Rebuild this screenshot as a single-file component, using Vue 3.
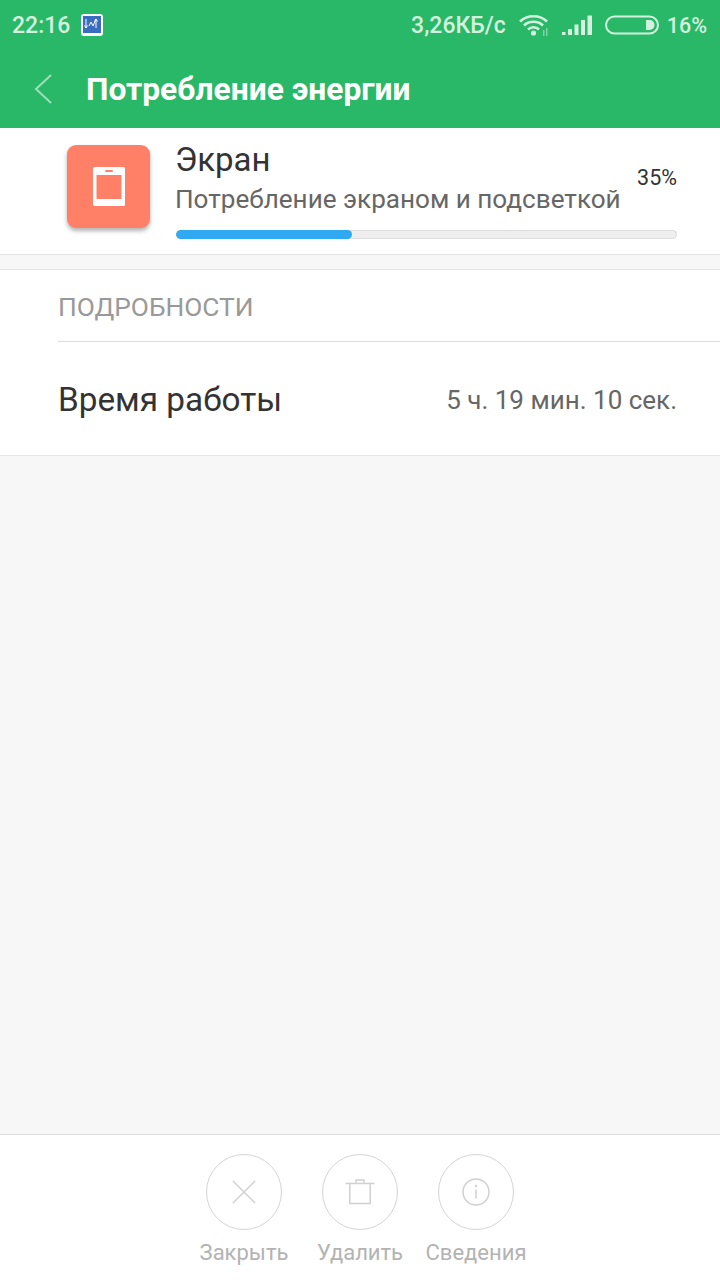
<script setup>
const actions = [
  { id: 'close', label: 'Закрыть' },
  { id: 'delete', label: 'Удалить' },
  { id: 'info', label: 'Сведения' },
]
</script>

<template>
  <div class="page">
    <div class="topbar">
      <div class="status">
        <span class="time">22:16</span>
        <svg class="notif" width="22" height="22" viewBox="0 0 22 22">
          <rect x="0" y="0" width="22" height="22" rx="3" fill="#fff" />
          <rect x="2" y="2" width="18" height="17" fill="#3a6cc0" />
          <path d="M5 5v9M3.500 11.500L5 14l1.500-2.500M8 12l2-4 2 4 3-7v9M13.500 7.500L15 5l1.500 2.500" fill="none" stroke="#fff" stroke-width="1" />
        </svg>
        <span class="spacer"></span>
        <span class="speed">3,26КБ/с</span>
        <svg class="wifi" width="30" height="24" viewBox="0 0 30 24">
          <path d="M1 8.500C8 1.500 21 1.500 28 8.500M5 12.500C10 7.500 19 7.500 24 12.500M9 16.500C12 13.500 17 13.500 20 16.500" fill="none" stroke="#d4f1df" stroke-width="2.600" />
          <circle cx="14.500" cy="20" r="2.600" fill="#d4f1df" />
          <path d="M24 17h1.500v6H24zM27 15h1.500v8H27z" fill="#d4f1df" opacity="0.5" />
        </svg>
        <svg class="signal" width="32" height="22" viewBox="0 0 32 22">
          <path d="M1 18h3.500v3H1zM7 15h4v6H7zM13.500 10.500h4V21h-4zM20 6h4v15h-4zM26.500 1.500H31V21h-4.500z" fill="#d4f1df" />
        </svg>
        <svg class="battery" width="54" height="20" viewBox="0 0 54 20">
          <rect x="1" y="1.500" width="52" height="17" rx="8.500" fill="none" stroke="#d4f1df" stroke-width="2" />
          <path d="M41 5h3.500a5 5 0 0 1 0 10H41z" fill="#d4f1df" />
        </svg>
        <span class="percent">16%</span>
      </div>
      <div class="titlebar">
        <svg class="back" width="20" height="32" viewBox="0 0 20 32">
          <path d="M18 2L3 16l15 14" fill="none" stroke="#9be0b6" stroke-width="2" />
        </svg>
        <span class="title">Потребление энергии</span>
      </div>
    </div>

    <div class="usage">
      <div class="app-icon">
        <svg width="32" height="39" viewBox="0 0 32 39">
          <path fill-rule="evenodd" d="M1.500 0h29A1.500 1.500 0 0 1 32 1.500v36a1.500 1.500 0 0 1-1.500 1.500h-29A1.500 1.500 0 0 1 0 37.500v-36A1.500 1.500 0 0 1 1.500 0zM3.500 8v24h25V8z" fill="#fff" />
          <rect x="12" y="3" width="8" height="2" rx="1" fill="#ff8066" />
        </svg>
      </div>
      <div class="usage-body">
        <div class="usage-top">
          <div class="usage-text">
            <div class="usage-name">Экран</div>
            <div class="usage-desc">Потребление экраном и подсветкой</div>
          </div>
          <div class="usage-pct">35%</div>
        </div>
        <div class="bar"><div class="bar-fill" :style="{ width: '35.200%' }"></div></div>
      </div>
    </div>

    <div class="details">
      <div class="details-head"><span>ПОДРОБНОСТИ</span></div>
      <div class="details-row">
        <span class="row-label">Время работы</span>
        <span class="row-value">5 ч. 19 мин. 10 сек.</span>
      </div>
    </div>

    <div class="fill"></div>

    <div class="footer">
      <div v-for="a in actions" :key="a.id" class="action">
        <div class="circle">
          <svg v-if="a.id === 'close'" width="30" height="30" viewBox="0 0 30 30">
            <path d="M4 4l22 22M26 4L4 26" fill="none" stroke="#d0d0d0" stroke-width="1.500" />
          </svg>
          <svg v-else-if="a.id === 'delete'" width="30" height="30" viewBox="0 0 30 30">
            <path d="M0.500 6.500h29M4.800 6.500V26.500h20.400V6.500M11 6.500V3h8v3.500" fill="none" stroke="#d0d0d0" stroke-width="1.500" />
          </svg>
          <svg v-else width="30" height="30" viewBox="0 0 30 30">
            <circle cx="15" cy="15" r="13" fill="none" stroke="#d0d0d0" stroke-width="1.500" />
            <path d="M15 12.500v9" stroke="#d0d0d0" stroke-width="1.500" />
            <circle cx="15" cy="9" r="1.200" fill="#d0d0d0" />
          </svg>
        </div>
        <span class="action-label">{{ a.label }}</span>
      </div>
    </div>
  </div>
</template>

<style scoped>
.page {
  display: flex;
  flex-direction: column;
  width: 720px;
  height: 1280px;
  background: #f7f7f7;
  font-family: Roboto, "Noto Sans", sans-serif;
  overflow: hidden;
}

.topbar {
  height: 128px;
  background: #29b867;
}

.status {
  display: flex;
  align-items: center;
  height: 50px;
  padding: 0 13px 0 12px;
  color: #d4f1df;
  font-size: 23px;
  font-weight: 500;
}

.notif {
  margin-left: 11px;
}

.spacer {
  flex: 1;
}

.wifi {
  margin-left: 13px;
}

.signal {
  margin-left: 12px;
}

.battery {
  margin-left: 12px;
}

.percent {
  margin-left: 8px;
  font-size: 21.500px;
}

.titlebar {
  display: flex;
  align-items: center;
  height: 78px;
  padding-left: 33px;
}

.title {
  margin-left: 33px;
  color: #fff;
  font-size: 31.800px;
  font-weight: 700;
}

.usage {
  display: flex;
  box-sizing: border-box;
  height: 127px;
  padding: 17px 43px 0 67px;
  background: #fff;
  border-bottom: 1px solid #e4e4e4;
}

.app-icon {
  display: flex;
  align-items: center;
  justify-content: center;
  width: 83px;
  height: 83px;
  border-radius: 9px;
  background: #ff8066;
  box-shadow: 0 3px 4px rgba(0, 0, 0, 0.3);
}

.usage-body {
  flex: 1;
  margin-left: 25px;
}

.usage-top {
  display: flex;
  justify-content: space-between;
  align-items: center;
}

.usage-name {
  color: #333;
  font-size: 33px;
  line-height: 30px;
}

.usage-desc {
  margin-top: 9px;
  color: #666;
  font-size: 26.100px;
  line-height: 30px;
}

.usage-pct {
  margin-top: -5px;
  color: #333;
  font-size: 21.500px;
}

.bar {
  height: 9px;
  margin-top: 16px;
  margin-left: 1px;
  border-radius: 5px;
  background: #eee;
  box-shadow: inset 0 0 0 1px #ddd;
  overflow: hidden;
}

.bar-fill {
  height: 100%;
  border-radius: 5px;
  background: #2fa9f2;
}

.details {
  margin-top: 14px;
  background: #fff;
  border-top: 1px solid #e4e4e4;
  border-bottom: 1px solid #e4e4e4;
  padding-left: 58px;
}

.details-head {
  display: flex;
  align-items: center;
  height: 72px;
  padding-top: 3px;
  box-sizing: border-box;
  color: #999;
  font-size: 26.300px;
  border-bottom: 1px solid #ddd;
}

.details-row {
  display: flex;
  justify-content: space-between;
  align-items: center;
  height: 113px;
  padding-top: 2px;
  box-sizing: border-box;
  padding-right: 43px;
}

.row-label {
  color: #333;
  font-size: 33.300px;
}

.row-value {
  color: #666;
  font-size: 26px;
}

.fill {
  flex: 1;
}

.footer {
  display: flex;
  justify-content: center;
  gap: 40px;
  height: 146px;
  box-sizing: border-box;
  padding-top: 19px;
  background: #fff;
  border-top: 1px solid #ddd;
}

.action {
  display: flex;
  flex-direction: column;
  align-items: center;
  width: 76px;
}

.circle {
  display: flex;
  flex-shrink: 0;
  align-items: center;
  justify-content: center;
  width: 76px;
  height: 76px;
  box-sizing: border-box;
  border: 1.500px solid #d4d4d4;
  border-radius: 50%;
}

.action-label {
  margin-top: 10px;
  color: #b3b3b3;
  font-size: 22px;
  white-space: nowrap;
}
</style>
